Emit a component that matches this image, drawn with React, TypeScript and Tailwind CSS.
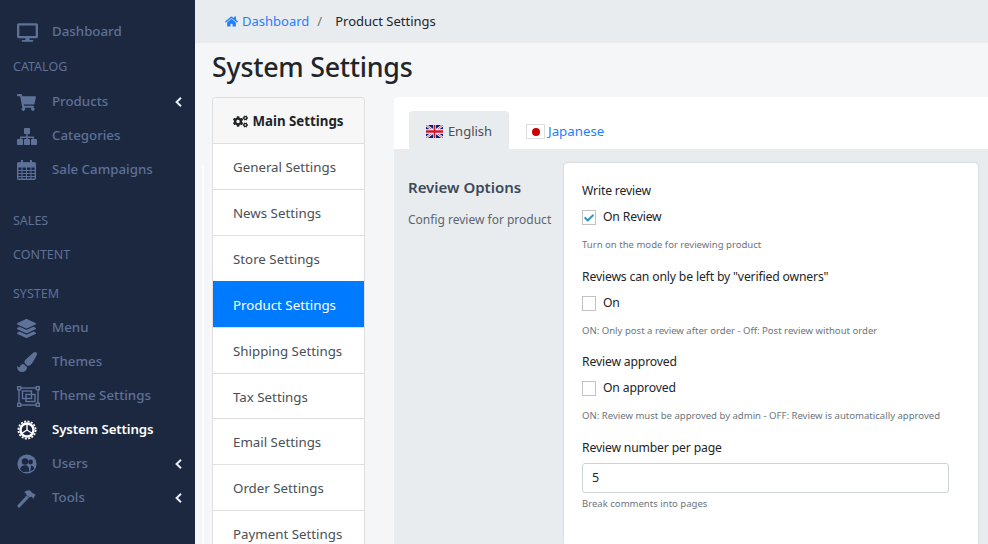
import { FaHome, FaShoppingCart, FaLayerGroup, FaPaintBrush, FaCogs, FaCheck, FaDesktop } from 'react-icons/fa';
import type { ReactNode } from 'react';

function GearIcon() {
  return (
    <svg viewBox="0 0 20 20" className="w-[20px] h-[20px]" fill="none" stroke="currentColor">
      <circle cx="10" cy="10" r="6.5" strokeWidth="2.4" />
      <circle cx="10" cy="10" r="8.6" strokeWidth="1.8" strokeDasharray="2 1.4" />
      <path d="M10 10 L10 3.5 M10 10 L4.5 13.5 M10 10 L15.5 13.5" strokeWidth="1.4" />
    </svg>
  );
}

function ThemeSettingsIcon() {
  return (
    <svg viewBox="0 0 23 21" className="w-[23px] h-[21px]" fill="none" stroke="currentColor" strokeWidth="1.4">
      <rect x="2" y="2" width="19" height="17" />
      <rect x="0.7" y="0.7" width="3" height="3" fill="#1c2840" />
      <rect x="19.3" y="0.7" width="3" height="3" fill="#1c2840" />
      <rect x="0.7" y="17.3" width="3" height="3" fill="#1c2840" />
      <rect x="19.3" y="17.3" width="3" height="3" fill="#1c2840" />
      <rect x="5.5" y="5" width="9" height="7.5" />
      <rect x="9" y="8.5" width="9" height="7" />
    </svg>
  );
}

function UsersIcon() {
  return (
    <svg viewBox="0 0 20 20" className="w-[20px] h-[20px]">
      <circle cx="10" cy="10" r="9.6" fill="currentColor" />
      <circle cx="8" cy="7.5" r="3.2" fill="#1c2840" />
      <path d="M3 15.5 C3.5 12.5 5.5 11.3 8 11.3 C10.5 11.3 12 12.5 12.4 17.8 L6 18 Z" fill="#1c2840" />
      <circle cx="13.6" cy="8" r="2.4" fill="#1c2840" />
      <path d="M13.4 17.4 L14 11.5 C16 11.5 17 13 17.2 15 Z" fill="#1c2840" />
    </svg>
  );
}

function SitemapIcon() {
  return (
    <svg viewBox="0 0 20 17" className="w-[20px] h-[17px]" fill="currentColor">
      <rect x="7" y="0" width="6" height="6" rx="0.8" />
      <path d="M9.3 6h1.4v2.6h6.2V11h-1.4V10H10.7v1H9.3v-1H4.5v1H3.1V8.6h6.2z" />
      <rect x="0" y="11" width="6" height="6" rx="0.8" />
      <rect x="7" y="11" width="6" height="6" rx="0.8" />
      <rect x="14" y="11" width="6" height="6" rx="0.8" />
    </svg>
  );
}

function CalendarIcon() {
  return (
    <svg viewBox="0 0 19 20" className="w-[19px] h-[20px]" fill="none" stroke="currentColor">
      <rect x="0.7" y="3" width="17.6" height="16.3" rx="1" strokeWidth="1.4" />
      <path d="M0.7 3h17.6v4H0.7z" fill="currentColor" strokeWidth="1" />
      <path d="M1 10.5h17M1 13.5h17M1 16.5h17M5 7v12M9.5 7v12M14 7v12" strokeWidth="1" />
      <path d="M5 0.5v4M14 0.5v4" strokeWidth="2" strokeLinecap="round" />
    </svg>
  );
}

function HammerIcon() {
  return (
    <svg viewBox="0 0 19 19" className="w-[19px] h-[19px]" fill="currentColor">
      <path d="M0.6 16.2 L9.6 6.6 L12 8.8 L2.6 18.4 Q1.8 19 1 18.2 Q0.2 17 0.6 16.2Z" />
      <path d="M7.2 3.6 Q10 0.4 13 1.6 L15.4 4 L18.6 5.4 L16.2 9.8 L14.4 7.6 L12.4 8.6 L9 5.6 Q9.6 4 7.2 3.6Z" />
    </svg>
  );
}

function Caret() {
  return (
    <svg viewBox="0 0 7 10" className="absolute right-[13px] top-[13px] h-[10px] w-[7px]" fill="none" stroke="#e8ecf3" strokeWidth="2">
      <path d="M6 0.8 L1.6 5 L6 9.2" />
    </svg>
  );
}

function NavItem({ icon, label, active, caret }: { icon: ReactNode; label: string; active?: boolean; caret?: boolean }) {
  return (
    <div className={`relative flex items-center h-[34px] pt-[2px] pl-[17px] ${active ? 'text-white font-semibold text-[13.3px] tracking-[-0.15px]' : 'text-[#5e7198] font-medium text-[13.3px]'}`}>
      <span className="w-[35px] flex items-center">{icon}</span>
      <span>{label}</span>
      {caret && <Caret />}
    </div>
  );
}

function SectionTitle({ label, className }: { label: string; className: string }) {
  return <div className={`pl-[13px] text-[12.5px] leading-[17px] text-[#5e7198] ${className}`}>{label}</div>;
}

const settingsMenu = ['General Settings', 'News Settings', 'Store Settings', 'Product Settings', 'Shipping Settings', 'Tax Settings', 'Email Settings', 'Order Settings', 'Payment Settings'];

function Sidebar() {
  return (
    <aside className="w-[195px] shrink-0 bg-[#1c2840] pt-[14px]">
      <NavItem icon={<FaDesktop className="text-[21px]" />} label="Dashboard" />
      <SectionTitle label="CATALOG" className="mt-[10px] mb-[9px]" />
      <NavItem icon={<FaShoppingCart className="text-[19px]" />} label="Products" caret />
      <NavItem icon={<SitemapIcon />} label="Categories" />
      <NavItem icon={<CalendarIcon />} label="Sale Campaigns" />
      <SectionTitle label="SALES" className="mt-[26px]" />
      <SectionTitle label="CONTENT" className="mt-[17px]" />
      <SectionTitle label="SYSTEM" className="mt-[22px] mb-[8px]" />
      <NavItem icon={<FaLayerGroup className="text-[19px]" />} label="Menu" />
      <NavItem icon={<FaPaintBrush className="text-[20px]" />} label="Themes" />
      <NavItem icon={<ThemeSettingsIcon />} label="Theme Settings" />
      <NavItem icon={<GearIcon />} label="System Settings" active />
      <NavItem icon={<UsersIcon />} label="Users" caret />
      <NavItem icon={<HammerIcon />} label="Tools" caret />
    </aside>
  );
}

function SettingsMenu() {
  return (
    <div className="w-[153px] shrink-0 rounded-t-[4px] border border-[#dfdfdf] border-b-0 bg-white text-[13.3px]">
      <div className="flex h-[45.4px] items-center justify-center gap-[4px] rounded-t-[4px] bg-[#f7f7f7] pt-[2px] font-bold text-[#212529]">
        <FaCogs className="text-[15px]" />
        Main Settings
      </div>
      {settingsMenu.map((item) => (
        <div
          key={item}
          className={`flex h-[45.85px] items-center border-t pt-[3px] pl-[20px] ${item === 'Product Settings' ? 'border-[#007bff] bg-[#007bff] text-white' : 'border-[#dfdfdf] text-[#495057]'}`}
        >
          {item}
        </div>
      ))}
    </div>
  );
}

function Option({ title, option, hint, checked }: { title: string; option: string; hint: string; checked?: boolean }) {
  return (
    <div className="mb-[13.5px]">
      <div className="h-[21px] text-[12.2px] leading-[21px] tracking-[-0.16px] text-[#212529]">{title}</div>
      <div className="mt-[9px] flex h-[15px] items-center gap-[7px] text-[12.2px] tracking-[-0.16px] text-[#212529]">
        <span className="flex h-[15px] w-[14px] items-center justify-center border border-[#c2c2c2] bg-white">
          {checked && <FaCheck className="text-[10px] text-[#2f8fc9]" />}
        </span>
        {option}
      </div>
      <div className="mt-[13px] h-[14px] text-[9.55px] leading-[14px] text-[#6c757d]">{hint}</div>
    </div>
  );
}

export default function App() {
  return (
    <div className="relative flex h-[544px] w-[988px] overflow-hidden bg-[#f5f6f8] font-['Noto_Sans',sans-serif]">
      <Sidebar />
      <main className="min-w-0 flex-1">
        <div className="flex h-[43px] items-center bg-[#e9ecef] pl-[30px] text-[13px] text-[#212529]">
          <FaHome className="mr-[4px] text-[13px] text-[#1f7fff]" />
          <span className="text-[#1f7fff]">Dashboard</span>
          <span className="mx-[8px] text-[#6c757d]">/</span>
          <span className="ml-[5px]">Product Settings</span>
        </div>
        <h1 className="mt-[6px] ml-[17px] h-[36px] text-[26.8px] leading-[36px] font-medium tracking-[-0.25px] text-[#212529]">System Settings</h1>
        <div className="mt-[12px] flex items-start gap-[29px] pl-[17px]">
          <SettingsMenu />
          <div className="flex-1 rounded-tl-[4px] bg-white">
            <div className="flex h-[52px] items-end pl-[15px] text-[13px]">
              <div className="flex h-[38px] w-[100px] items-center justify-center gap-[5px] rounded-t-[4px] bg-[#e9ecef] pt-[3px] text-[#495057]">
                <svg viewBox="0 0 60 30" preserveAspectRatio="none" className="h-[13px] w-[17px]">
                  <rect width="60" height="30" fill="#00247d" />
                  <path d="M0 0L60 30M60 0L0 30" stroke="#fff" strokeWidth="6" />
                  <path d="M0 0L60 30M60 0L0 30" stroke="#cf142b" strokeWidth="2" />
                  <path d="M30 0V30M0 15H60" stroke="#fff" strokeWidth="10" />
                  <path d="M30 0V30M0 15H60" stroke="#cf142b" strokeWidth="6" />
                </svg>
                English
              </div>
              <div className="ml-[17px] flex h-[38px] items-center gap-[3px] pt-[3px] text-[13.3px] text-[#1f7fff]">
                <span className="flex h-[15px] w-[19px] items-center justify-center border border-[#dddddd] bg-white">
                  <span className="h-[8px] w-[8px] rounded-full bg-[#cc0000]" />
                </span>
                Japanese
              </div>
            </div>
            <div className="flex h-[395px] bg-[#e9ecef] pt-[14px] pl-[14px]">
              <div className="w-[156px] shrink-0 pt-[14px]">
                <div className="text-[15px] leading-[21px] font-semibold text-[#3b4a5a]">Review Options</div>
                <div className="mt-[13px] text-[12px] leading-[18px] text-[#5a6672]">Config review for product</div>
              </div>
              <div className="h-[383px] w-[414px] rounded-[4px] bg-white px-[18px] pt-[17px] shadow-[0_0_2px_rgba(0,0,0,0.2)]">
                <Option title="Write review" option="On Review" hint="Turn on the mode for reviewing product" checked />
                <Option title={'Reviews can only be left by "verified owners"'} option="On" hint="ON: Only post a review after order - Off: Post review without order" />
                <Option title="Review approved" option="On approved" hint="ON: Review must be approved by admin - OFF: Review is automatically approved" />
                <div className="h-[21px] text-[12.2px] leading-[21px] tracking-[-0.16px] text-[#212529]">Review number per page</div>
                <input
                  readOnly
                  value="5"
                  className="mt-[5px] block h-[30px] w-[367px] rounded-[3px] border border-[#ced4da] px-[9px] text-[12.5px] text-[#212529]"
                />
                <div className="mt-[4px] text-[9.55px] leading-[14px] text-[#6c757d]">Break comments into pages</div>
              </div>
            </div>
          </div>
        </div>
      </main>
      <div className="absolute top-[165px] bottom-0 left-[202px] w-[2px] bg-white/70" />
    </div>
  );
}
